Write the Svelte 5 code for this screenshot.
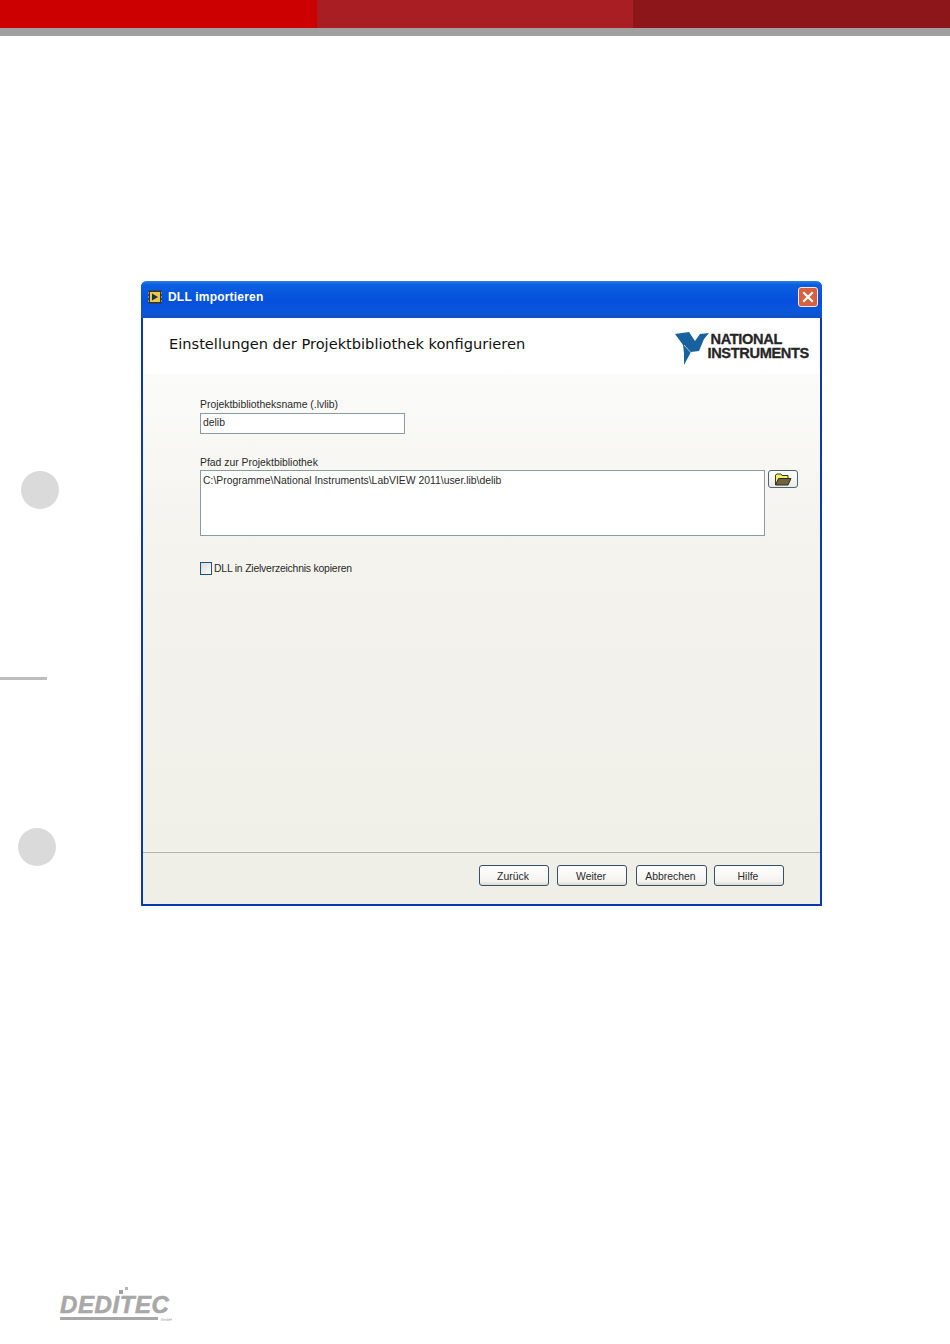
<script>
	const buttons = ["Zurück", "Weiter", "Abbrechen", "Hilfe"];
</script>

<div class="page">
	<div class="topbar">
		<div class="seg red"></div>
		<div class="seg mid"></div>
		<div class="seg dark"></div>
	</div>

	<div class="hole one"></div>
	<div class="rule"></div>
	<div class="hole two"></div>

	<div class="dialog">
		<div class="titlebar">
			<svg class="appicon" viewBox="0 0 14 14" width="14" height="14">
				<rect x="0.5" y="0.5" width="13" height="13" fill="#3a3420" />
				<rect x="2" y="2" width="10" height="10" fill="#e8c94a" />
				<path d="M4 3.5 L10 7 L4 10.5 Z" fill="#20303a" />
				<path d="M0 3h1M0 7h1M0 11h1M13 3h1M13 7h1M13 11h1" stroke="#d8d8c8" />
			</svg>
			<span class="title">DLL importieren</span>
			<div class="close">
				<svg viewBox="0 0 18 18" width="18" height="18">
					<path d="M5 5 L13 13 M13 5 L5 13" stroke="#fff" stroke-width="2.2" stroke-linecap="square" />
				</svg>
			</div>
		</div>

		<div class="head">
			<h1>Einstellungen der Projektbibliothek konfigurieren</h1>
			<div class="nilogo">
				<svg viewBox="0 0 36 36" width="36" height="36">
					<path d="M1 4 L15 2 L21 11 L26 4 L35 3 L30 9 L25 21 L17 22 L10 35 L10 23 L9 15 Z" fill="#17619f" />
					<path d="M10 15 L19 25" stroke="#cfe0ee" stroke-width="0.8" />
				</svg>
				<div class="niname">
					<span>NATIONAL</span>
					<span>INSTRUMENTS</span>
				</div>
			</div>
		</div>

		<div class="content">
			<label class="first" for="libname">Projektbibliotheksname (.lvlib)</label>
			<input id="libname" class="textfield" value="delib" />

			<label class="second" for="libpath">Pfad zur Projektbibliothek</label>
			<div class="pathrow">
				<div id="libpath" class="pathbox">C:\Programme\National Instruments\LabVIEW 2011\user.lib\delib</div>
				<div class="browse">
					<svg viewBox="0 0 18 13" width="18" height="13">
						<path d="M1.5 12 V2 L3 1 H7 L8 2.5 H14 V5" fill="#f4f06a" stroke="#3b3a20" />
						<path d="M1.5 12 L4.5 5.5 H17 L14 12 Z" fill="#6e6440" stroke="#2e2c1c" />
					</svg>
				</div>
			</div>

			<div class="checkrow">
				<span class="check"></span>
				<span class="checktext">DLL in Zielverzeichnis kopieren</span>
			</div>
		</div>

		<div class="footer">
			{#each buttons as label}
				<div class="btn">{label}</div>
			{/each}
		</div>
	</div>

	<div class="deditec">
		<svg class="dots" viewBox="0 0 12 8" width="12" height="8">
			<rect x="0" y="3" width="4" height="4" fill="#a0a0a0" />
			<rect x="6" y="0" width="3" height="3" fill="#b4b4b4" />
		</svg>
		<div class="word">DEDITEC</div>
		<div class="underline">
			<div class="bar"></div>
			<span class="gmbh">GmbH</span>
		</div>
	</div>
</div>

<style>
	:global(body) {
		background: #fff;
	}

	.page {
		position: relative;
		width: 950px;
		height: 1344px;
		overflow: hidden;
		background: #fff;
		font-family: "Liberation Sans", Arial, sans-serif;
	}

	.topbar {
		display: flex;
		height: 28px;
		border-bottom: 8px solid #a0a0a0;
	}

	.seg {
		flex: 1;
	}

	.red {
		background: #cc0000;
	}

	.mid {
		background: #a81e22;
	}

	.dark {
		background: #8c1619;
	}

	.hole {
		position: absolute;
		width: 38px;
		height: 38px;
		border-radius: 50%;
		background: #dadada;
	}

	.one {
		left: 21px;
		top: 471px;
	}

	.two {
		left: 18px;
		top: 828px;
	}

	.rule {
		position: absolute;
		left: 0;
		top: 677px;
		width: 47px;
		height: 3px;
		background: #bdbdbd;
	}

	.dialog {
		box-sizing: border-box;
		width: 681px;
		height: 625px;
		margin: 245px 0 0 141px;
		display: flex;
		flex-direction: column;
		border: 2px solid #0a3ab0;
		border-top: 0;
		border-radius: 6px 6px 0 0;
		background: #f0efe8;
		color: #2a2a2a;
		font-size: 10.4px;
	}

	.titlebar {
		display: flex;
		align-items: center;
		height: 37px;
		margin: 0 -2px;
		padding: 0 4px 6px 7px;
		box-sizing: border-box;
		border-radius: 6px 6px 0 0;
		background: linear-gradient(#2a7fe8 0, #0b5fe0 10%, #0450dc 55%, #0a56dc 80%, #0f4fc8 100%);
	}

	.appicon {
		margin-right: 6px;
	}

	.title {
		flex: 1;
		color: #fff;
		font-size: 12px;
		font-weight: bold;
		letter-spacing: 0.2px;
	}

	.close {
		display: flex;
		width: 20px;
		height: 20px;
		box-sizing: border-box;
		align-items: center;
		justify-content: center;
		border: 1px solid #f0e8e0;
		border-radius: 3px;
		background: #d9603c;
	}

	.head {
		display: flex;
		align-items: center;
		justify-content: space-between;
		height: 56px;
		padding: 0 11px 0 26px;
		background: #fff;
	}

	h1 {
		margin: -6px 0 0;
		color: #111;
		font-family: "DejaVu Sans", Verdana, sans-serif;
		font-size: 14.6px;
		font-weight: normal;
	}

	.nilogo {
		display: flex;
		align-items: flex-start;
		margin-top: 4px;
	}

	.nilogo svg {
		margin-right: -3px;
	}

	.niname {
		display: flex;
		flex-direction: column;
		margin-top: 2px;
		color: #262626;
		font-weight: bold;
		font-size: 14.6px;
		line-height: 14px;
		letter-spacing: -0.35px;
		-webkit-text-stroke: 0.3px #262626;
	}

	.niname span:first-child {
		margin-left: 3px;
	}

	.content {
		flex: 1;
		display: flex;
		flex-direction: column;
		align-items: flex-start;
		padding: 23px 0 0 57px;
		background: linear-gradient(#fbfbf9, #f4f3ee 35%, #f0efe8);
	}

	label {
		height: 14px;
		line-height: 16px;
	}

	.second {
		margin-top: 21px;
	}

	.textfield {
		box-sizing: border-box;
		width: 205px;
		height: 21px;
		margin: 2px 0 0;
		padding: 0 2px 3px;
		border: 1px solid #8a9aa6;
		background: #fff;
		color: #2a2a2a;
		font: inherit;
	}

	.pathrow {
		display: flex;
		margin-top: 1px;
	}

	.pathbox {
		box-sizing: border-box;
		width: 565px;
		height: 66px;
		padding: 4px 2px;
		border: 1px solid #8a9aa6;
		background: #fff;
	}

	.browse {
		display: flex;
		align-items: center;
		justify-content: center;
		box-sizing: border-box;
		width: 30px;
		height: 18px;
		margin: 0 0 0 3px;
		border: 1px solid #4c6478;
		border-radius: 3px;
		background: linear-gradient(#fff, #ecebe4);
	}

	.checkrow {
		display: flex;
		align-items: center;
		gap: 2px;
		margin-top: 25px;
	}

	.checktext {
		letter-spacing: -0.2px;
		line-height: 14px;
		padding-top: 1px;
	}

	.check {
		width: 10px;
		height: 11px;
		border: 1px solid #1c5180;
		background: linear-gradient(135deg, #dcdcd6, #fbfbf8);
	}

	.footer {
		display: flex;
		justify-content: flex-end;
		gap: 8px;
		height: 52px;
		box-sizing: border-box;
		padding: 12px 36px 0 0;
		border-top: 1px solid #b4b4ac;
		background: #f0efe7;
	}

	.btn {
		box-sizing: border-box;
		width: 70px;
		height: 21px;
		padding-right: 2px;
		border: 1px solid #35506a;
		border-radius: 3px;
		background: linear-gradient(#fff, #f4f3ee 80%, #dcd9cf);
		text-align: center;
		line-height: 21px;
	}

	.btn:nth-child(3) {
		width: 71px;
		margin: 0 -1px 0 1px;
	}

	.deditec {
		position: absolute;
		left: 60px;
		top: 1287px;
		width: 112px;
		color: #a8a8a8;
	}

	.dots {
		display: block;
		margin-left: 59px;
	}

	.word {
		width: 100px;
		height: 20px;
		font-size: 24px;
		font-weight: bold;
		font-style: italic;
		line-height: 20px;
		letter-spacing: 0.6px;
		white-space: nowrap;
		-webkit-text-stroke: 0.6px #a8a8a8;
	}

	.underline {
		display: flex;
		align-items: flex-start;
		gap: 2px;
		height: 5px;
		margin-top: 2px;
	}

	.bar {
		flex: 1;
		height: 3px;
		background: #a8a8a8;
	}

	.gmbh {
		font-size: 4px;
		line-height: 5px;
	}
</style>
